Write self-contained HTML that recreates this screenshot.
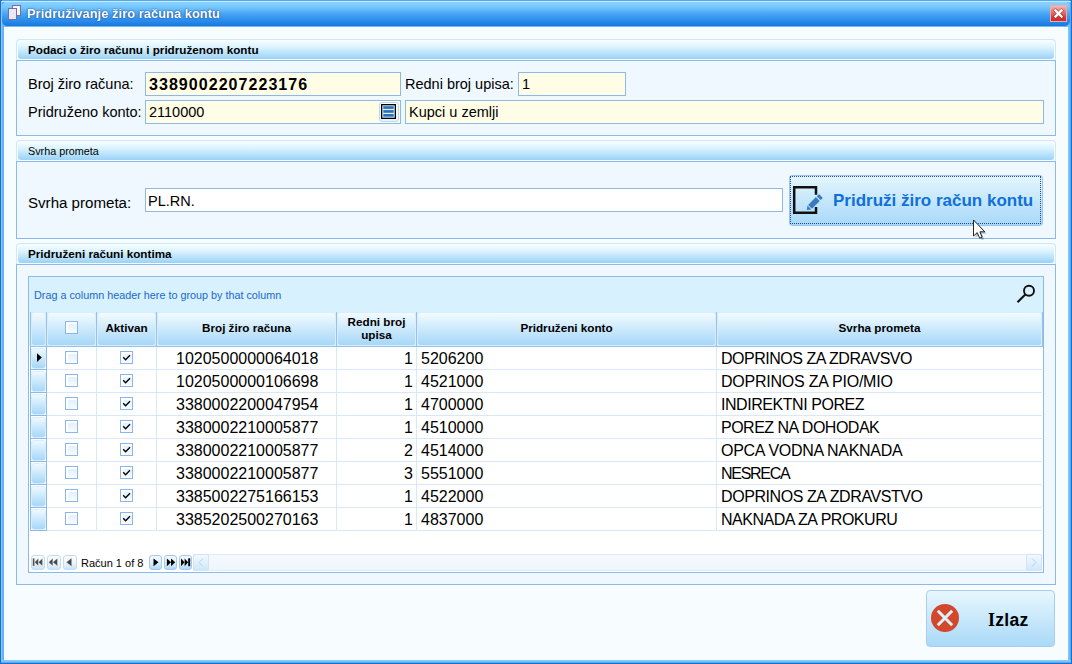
<!DOCTYPE html>
<html><head><meta charset="utf-8">
<style>
*{box-sizing:border-box;margin:0;padding:0}
html,body{width:1072px;height:664px;overflow:hidden;background:#f7fcff;font-family:"Liberation Sans",sans-serif;color:#000}
.a{position:absolute}
.nw{white-space:nowrap}
#win{position:absolute;left:0;top:0;width:1072px;height:664px;background:#1a6ed0}
#frame{position:absolute;left:1px;top:1px;width:1070px;height:662px;background:#6cbcf8}
#fl{position:absolute;left:1px;top:1px;width:3px;height:662px;background:linear-gradient(90deg,#92d0fa,#68b8f6 50%,#58aef4)}
#fr{position:absolute;left:1068px;top:1px;width:3px;height:662px;background:linear-gradient(90deg,#80c8fa,#70c0f8 50%,#4a9ee8)}
#fb{position:absolute;left:1px;top:660px;width:1070px;height:3px;background:linear-gradient(#88ccfa,#78c4f8 50%,#4a9ee8)}
#ft{position:absolute;left:1px;top:1px;width:1070px;height:1px;background:#c4eaff}
#ft0{position:absolute;left:2px;top:0;width:1068px;height:1px;background:#52a8ec}
#title{position:absolute;left:2px;top:2px;width:1068px;height:24px;background:linear-gradient(#8ad2fe 0%,#78c8fc 20%,#46a4f2 50%,#2a8cea 78%,#1878e0 100%);border-radius:5px}
#client{position:absolute;left:4px;top:27px;width:1064px;height:633px;background:#f7fcff;border-left:1px solid #fff;border-top:1px solid #fff}
.ttl{position:absolute;left:25px;top:4px;letter-spacing:0.1px;font-weight:bold;font-size:12.75px;color:#fff;text-shadow:0 0 2px #1b4f9a,0 0 1px #1b4f9a;white-space:nowrap}
.grp{position:absolute;left:16px;width:1040px;border:1px solid #8db8ea;background:#eff8ff}
.grp{border-top:none}
.gh{position:absolute;left:-1px;top:0;right:-1px;height:22px;background:#f7fcff;border-bottom:1px solid #8db8ea}
.gho{position:absolute;left:0;top:0;right:0;height:21px;border:1px solid #cfe8f9;border-bottom:none;border-radius:4px 4px 0 0;background:#f6fcff}
.ghi{position:absolute;left:1px;top:1px;right:1px;bottom:1px;border-radius:3px;background:linear-gradient(#f4fdff,#daf3fe 35%,#9ad2f6)}
.ght{position:absolute;left:12px;top:4px;font-size:11.7px;white-space:nowrap}
.lbl{position:absolute;font-size:14.5px;white-space:nowrap}
.inp{position:absolute;border:1px solid #8db8ea;background:#fffde6;height:24px}
.it{position:absolute;left:3px;top:3px;font-size:14.5px;white-space:nowrap}
.hc{position:absolute;top:312px;height:34px;border-radius:3px;background:linear-gradient(#f2fbff,#a6d7f8);border:1px solid #d8eefc}
.ht{position:absolute;font-weight:bold;font-size:11.7px;white-space:nowrap;text-align:center;line-height:13px}
.vl{position:absolute;width:1px}
.hl{position:absolute;height:1px}
.rt{position:absolute;font-size:16px;white-space:nowrap}
.cb{position:absolute;width:13px;height:13px;border:1px solid #8ab6ec;background:#fff}
.cbi{position:absolute;left:2px;top:2px;width:9px;height:9px;border-radius:2px;background:linear-gradient(#e2f0fc,#f8fcff)}
.ic{position:absolute;left:31px;width:15px;height:21px;border-radius:3px;background:linear-gradient(#eef9ff,#a6d7f8);border:1px solid #d8eefc}
.nb{position:absolute;top:555px;width:14px;height:15px;border:1px solid #c2dcf4;border-radius:3px;background:linear-gradient(#fbfdff,#eef7fe 50%,#c8e6fa)}
</style></head><body>
<div id="win"></div><div id="frame"></div><div id="fl"></div><div id="fr"></div><div id="fb"></div><div id="ft"></div><div id="ft0"></div>
<div id="title">
  <svg class="a" style="left:6px;top:3px" width="14" height="16" viewBox="0 0 14 16">
    <rect x="4.5" y="0.5" width="8" height="10" fill="#f4f6fb" stroke="#7a6f9a"/>
    <rect x="0.5" y="3.5" width="8" height="11" fill="#e6eaf6" stroke="#7a6f9a"/>
  </svg>
  <div class="ttl">Pridruživanje žiro računa kontu</div>
  <div class="a" style="left:1048px;top:3px;width:17px;height:17px;background:linear-gradient(#f4b8b8,#e26a6a 45%,#d63a3a 75%,#cc2a2a);border:1px solid #f0aaaa"></div>
  <svg class="a" style="left:1048px;top:3px" width="17" height="17" viewBox="0 0 17 17"><path d="M5.5 5.5L11.5 11.5M11.5 5.5L5.5 11.5" stroke="#9a1a1a" stroke-opacity="0.4" stroke-width="4" stroke-linecap="square"/><path d="M5.5 5.5L11.5 11.5M11.5 5.5L5.5 11.5" stroke="#fff" stroke-width="2.3" stroke-linecap="square"/></svg>
</div>
<div id="client"></div>
<div class="grp" style="top:39px;height:97px"><div class="gh"><div class="gho"><div class="ghi"></div></div><div class="ght" style="font-weight:bold">Podaci o žiro računu i pridruženom kontu</div></div></div>
<div class="lbl" style="left:28px;top:76px">Broj žiro računa:</div>
<div class="inp" style="left:145px;top:72px;width:256px"><div class="it" style="font-weight:bold;font-size:16px;letter-spacing:1.05px;top:3px">3389002207223176</div></div>
<div class="lbl" style="left:405px;top:76px">Redni broj upisa:</div>
<div class="inp" style="left:518px;top:72px;width:108px"><div class="it">1</div></div>
<div class="lbl" style="left:28px;top:104px">Pridruženo konto:</div>
<div class="inp" style="left:145px;top:100px;width:256px"><div class="it">2110000</div>
  <div class="a" style="left:233px;top:1px;width:20px;height:20px;border:1px solid #b9d9f4;border-radius:3px;background:linear-gradient(#fdfeff,#e4f3fc)"></div>
  <svg class="a" style="left:235px;top:3px" width="15" height="15" viewBox="0 0 15 15"><rect x="0.65" y="0.65" width="13.7" height="13.7" fill="#d6f2fc" stroke="#000" stroke-width="1.3"/><rect x="2.3" y="2.2" width="10.4" height="2.7" fill="#2f6fb8"/><rect x="2.3" y="6.1" width="10.4" height="2.7" fill="#2f6fb8"/><rect x="2.3" y="10" width="10.4" height="2.7" fill="#2f6fb8"/></svg>
</div>
<div class="inp" style="left:405px;top:100px;width:639px"><div class="it">Kupci u zemlji</div></div>
<div class="grp" style="top:140px;height:99px"><div class="gh"><div class="gho"><div class="ghi"></div></div><div class="ght" style="font-size:10.8px;top:5px">Svrha prometa</div></div></div>
<div class="lbl" style="left:28px;top:194px;font-size:15.1px">Svrha prometa:</div>
<div class="inp" style="left:145px;top:188px;width:638px;background:#fff"><div class="it" style="left:2px;top:4px">PL.RN.</div></div>
<div class="a" style="left:789px;top:175px;width:254px;height:51px;border:1px solid #9cc4ee;border-radius:3px;background:linear-gradient(#e4f6fe,#a8d8f8)"></div>
<div class="a" style="left:790px;top:176px;width:251px;height:48px;border:1px dotted #1e4c8c"></div>
<svg class="a" style="left:790px;top:183px" width="36" height="32" viewBox="0 0 36 32">
  <path d="M26 11.8V4.2H4.2V29.8H26V23.9" fill="none" stroke="#111" stroke-width="2.5"/>
  <g transform="translate(20.05,23.8) rotate(-45)" fill="#3a7ac0"><rect x="0" y="-2.7" width="11" height="5.4"/><rect x="12.2" y="-2.7" width="3.2" height="5.4" rx="0.6"/><path d="M-1 -2.7V2.7L-4.6 0Z"/></g>
</svg>
<div class="a nw" style="left:833px;top:191px;font-weight:bold;font-size:17px;color:#0e70dc">Pridruži žiro račun kontu</div>
<div class="grp" style="top:243px;height:342px"><div class="gh"><div class="gho"><div class="ghi"></div></div><div class="ght" style="font-weight:bold">Pridruženi računi kontima</div></div></div>
<div class="a" style="left:28px;top:276px;width:1016px;height:297px;border:1px solid #8db8ea;background:#fff"></div>
<div class="a" style="left:29px;top:277px;width:1014px;height:35px;background:#d7f1fe"></div>
<div class="a nw" style="left:34px;top:289px;font-size:10.8px;color:#2168cc">Drag a column header here to group by that column</div>
<svg class="a" style="left:1014px;top:282px" width="24" height="24" viewBox="0 0 24 24"><circle cx="15" cy="8.8" r="5" fill="none" stroke="#111" stroke-width="1.9"/><path d="M11.3 12.5L3.5 20.3" stroke="#111" stroke-width="2.1"/></svg>
<div class="a" style="left:29px;top:312px;width:1014px;height:34px;background:#d7f1fe"></div>

<div class="hc" style="left:31px;width:15px"></div>
<div class="hc" style="left:47px;width:49px"></div>
<div class="hc" style="left:97px;width:59px"></div>
<div class="hc" style="left:157px;width:179px"></div>
<div class="hc" style="left:337px;width:79px"></div>
<div class="hc" style="left:417px;width:299px"></div>
<div class="hc" style="left:717px;width:325px"></div>
<div class="vl" style="left:30px;top:312px;height:35px;background:#98c0ec"></div>
<div class="vl" style="left:46px;top:312px;height:35px;background:#98c0ec"></div>
<div class="vl" style="left:96px;top:312px;height:35px;background:#98c0ec"></div>
<div class="vl" style="left:156px;top:312px;height:35px;background:#98c0ec"></div>
<div class="vl" style="left:336px;top:312px;height:35px;background:#98c0ec"></div>
<div class="vl" style="left:416px;top:312px;height:35px;background:#98c0ec"></div>
<div class="vl" style="left:716px;top:312px;height:35px;background:#98c0ec"></div>
<div class="vl" style="left:1042px;top:312px;height:35px;background:#98c0ec"></div>
<div class="hl" style="left:30px;top:346px;width:1013px;background:#98c0ec"></div>
<div class="cb" style="left:65px;top:321px"><div class="cbi"></div></div>
<div class="ht" style="left:97px;width:59px;top:321px">Aktivan</div>
<div class="ht" style="left:157px;width:179px;top:321px">Broj žiro računa</div>
<div class="ht" style="left:337px;width:79px;top:315px">Redni broj<br>upisa</div>
<div class="ht" style="left:417px;width:299px;top:321px">Pridruženi konto</div>
<div class="ht" style="left:717px;width:325px;top:321px">Svrha prometa</div>
<div class="ic" style="top:348px"></div>
<div class="hl" style="left:30px;top:369px;width:17px;background:#8cb8ec"></div>
<div class="hl" style="left:47px;top:369px;width:995px;background:#d8e8f8"></div>
<div class="cb" style="left:65px;top:351px"><div class="cbi"></div></div>
<div class="cb" style="left:120px;top:351px"><div class="cbi"></div></div>
<svg class="a" style="left:120px;top:351px" width="13" height="13" viewBox="0 0 13 13"><path d="M3.2 6.3L5.6 8.8L10 4.2" fill="none" stroke="#000" stroke-width="1.35"/></svg>
<div class="rt" style="left:176px;top:350px">1020500000064018</div>
<div class="rt" style="left:337px;width:76px;text-align:right;top:350px">1</div>
<div class="rt" style="left:421px;top:350px">5206200</div>
<div class="rt" style="left:721px;top:350px;letter-spacing:-0.48px">DOPRINOS ZA ZDRAVSVO</div>
<div class="ic" style="top:371px"></div>
<div class="hl" style="left:30px;top:392px;width:17px;background:#8cb8ec"></div>
<div class="hl" style="left:47px;top:392px;width:995px;background:#d8e8f8"></div>
<div class="cb" style="left:65px;top:374px"><div class="cbi"></div></div>
<div class="cb" style="left:120px;top:374px"><div class="cbi"></div></div>
<svg class="a" style="left:120px;top:374px" width="13" height="13" viewBox="0 0 13 13"><path d="M3.2 6.3L5.6 8.8L10 4.2" fill="none" stroke="#000" stroke-width="1.35"/></svg>
<div class="rt" style="left:176px;top:373px">1020500000106698</div>
<div class="rt" style="left:337px;width:76px;text-align:right;top:373px">1</div>
<div class="rt" style="left:421px;top:373px">4521000</div>
<div class="rt" style="left:721px;top:373px;letter-spacing:-0.23px">DOPRINOS ZA PIO/MIO</div>
<div class="ic" style="top:394px"></div>
<div class="hl" style="left:30px;top:415px;width:17px;background:#8cb8ec"></div>
<div class="hl" style="left:47px;top:415px;width:995px;background:#d8e8f8"></div>
<div class="cb" style="left:65px;top:397px"><div class="cbi"></div></div>
<div class="cb" style="left:120px;top:397px"><div class="cbi"></div></div>
<svg class="a" style="left:120px;top:397px" width="13" height="13" viewBox="0 0 13 13"><path d="M3.2 6.3L5.6 8.8L10 4.2" fill="none" stroke="#000" stroke-width="1.35"/></svg>
<div class="rt" style="left:176px;top:396px">3380002200047954</div>
<div class="rt" style="left:337px;width:76px;text-align:right;top:396px">1</div>
<div class="rt" style="left:421px;top:396px">4700000</div>
<div class="rt" style="left:721px;top:396px;letter-spacing:-0.45px">INDIREKTNI POREZ</div>
<div class="ic" style="top:417px"></div>
<div class="hl" style="left:30px;top:438px;width:17px;background:#8cb8ec"></div>
<div class="hl" style="left:47px;top:438px;width:995px;background:#d8e8f8"></div>
<div class="cb" style="left:65px;top:420px"><div class="cbi"></div></div>
<div class="cb" style="left:120px;top:420px"><div class="cbi"></div></div>
<svg class="a" style="left:120px;top:420px" width="13" height="13" viewBox="0 0 13 13"><path d="M3.2 6.3L5.6 8.8L10 4.2" fill="none" stroke="#000" stroke-width="1.35"/></svg>
<div class="rt" style="left:176px;top:419px">3380002210005877</div>
<div class="rt" style="left:337px;width:76px;text-align:right;top:419px">1</div>
<div class="rt" style="left:421px;top:419px">4510000</div>
<div class="rt" style="left:721px;top:419px;letter-spacing:-0.5px">POREZ NA DOHODAK</div>
<div class="ic" style="top:440px"></div>
<div class="hl" style="left:30px;top:461px;width:17px;background:#8cb8ec"></div>
<div class="hl" style="left:47px;top:461px;width:995px;background:#d8e8f8"></div>
<div class="cb" style="left:65px;top:443px"><div class="cbi"></div></div>
<div class="cb" style="left:120px;top:443px"><div class="cbi"></div></div>
<svg class="a" style="left:120px;top:443px" width="13" height="13" viewBox="0 0 13 13"><path d="M3.2 6.3L5.6 8.8L10 4.2" fill="none" stroke="#000" stroke-width="1.35"/></svg>
<div class="rt" style="left:176px;top:442px">3380002210005877</div>
<div class="rt" style="left:337px;width:76px;text-align:right;top:442px">2</div>
<div class="rt" style="left:421px;top:442px">4514000</div>
<div class="rt" style="left:721px;top:442px;letter-spacing:-0.3px">OPCA VODNA NAKNADA</div>
<div class="ic" style="top:463px"></div>
<div class="hl" style="left:30px;top:484px;width:17px;background:#8cb8ec"></div>
<div class="hl" style="left:47px;top:484px;width:995px;background:#d8e8f8"></div>
<div class="cb" style="left:65px;top:466px"><div class="cbi"></div></div>
<div class="cb" style="left:120px;top:466px"><div class="cbi"></div></div>
<svg class="a" style="left:120px;top:466px" width="13" height="13" viewBox="0 0 13 13"><path d="M3.2 6.3L5.6 8.8L10 4.2" fill="none" stroke="#000" stroke-width="1.35"/></svg>
<div class="rt" style="left:176px;top:465px">3380002210005877</div>
<div class="rt" style="left:337px;width:76px;text-align:right;top:465px">3</div>
<div class="rt" style="left:421px;top:465px">5551000</div>
<div class="rt" style="left:721px;top:465px;letter-spacing:-1.27px">NESRECA</div>
<div class="ic" style="top:486px"></div>
<div class="hl" style="left:30px;top:507px;width:17px;background:#8cb8ec"></div>
<div class="hl" style="left:47px;top:507px;width:995px;background:#d8e8f8"></div>
<div class="cb" style="left:65px;top:489px"><div class="cbi"></div></div>
<div class="cb" style="left:120px;top:489px"><div class="cbi"></div></div>
<svg class="a" style="left:120px;top:489px" width="13" height="13" viewBox="0 0 13 13"><path d="M3.2 6.3L5.6 8.8L10 4.2" fill="none" stroke="#000" stroke-width="1.35"/></svg>
<div class="rt" style="left:176px;top:488px">3385002275166153</div>
<div class="rt" style="left:337px;width:76px;text-align:right;top:488px">1</div>
<div class="rt" style="left:421px;top:488px">4522000</div>
<div class="rt" style="left:721px;top:488px;letter-spacing:-0.42px">DOPRINOS ZA ZDRAVSTVO</div>
<div class="ic" style="top:509px"></div>
<div class="hl" style="left:30px;top:530px;width:17px;background:#8cb8ec"></div>
<div class="hl" style="left:47px;top:530px;width:995px;background:#d8e8f8"></div>
<div class="cb" style="left:65px;top:512px"><div class="cbi"></div></div>
<div class="cb" style="left:120px;top:512px"><div class="cbi"></div></div>
<svg class="a" style="left:120px;top:512px" width="13" height="13" viewBox="0 0 13 13"><path d="M3.2 6.3L5.6 8.8L10 4.2" fill="none" stroke="#000" stroke-width="1.35"/></svg>
<div class="rt" style="left:176px;top:511px">3385202500270163</div>
<div class="rt" style="left:337px;width:76px;text-align:right;top:511px">1</div>
<div class="rt" style="left:421px;top:511px">4837000</div>
<div class="rt" style="left:721px;top:511px;letter-spacing:-0.48px">NAKNADA ZA PROKURU</div>
<div class="vl" style="left:30px;top:347px;height:183px;background:#8cb8ec"></div>
<div class="vl" style="left:46px;top:347px;height:183px;background:#8cb8ec"></div>
<div class="vl" style="left:96px;top:347px;height:183px;background:#d8e8f8"></div>
<div class="vl" style="left:156px;top:347px;height:183px;background:#d8e8f8"></div>
<div class="vl" style="left:336px;top:347px;height:183px;background:#d8e8f8"></div>
<div class="vl" style="left:416px;top:347px;height:183px;background:#d8e8f8"></div>
<div class="vl" style="left:716px;top:347px;height:183px;background:#d8e8f8"></div>
<svg class="a" style="left:36px;top:352px" width="8" height="11" viewBox="0 0 8 11"><path d="M1 1.2L5.8 5.6L1 10Z" fill="#000"/></svg>
<div class="nb" style="left:31px"></div>
<div class="nb" style="left:47px"></div>
<div class="nb" style="left:63px"></div>
<svg class="a" style="left:29px;top:552px" width="50" height="20" viewBox="0 0 50 20"><g fill="#4a4a4a" stroke="#fff" stroke-opacity="0.6" stroke-width="0.5"><path d="M3.7 6.3H5.6V14H3.7Z"/><path d="M5.6 10.2L9.4 6.3V14Z"/><path d="M9.4 10.2L13.5 6.3V14Z"/><path d="M19.6 10.2L23.8 6.3V14Z"/><path d="M23.8 10.2L28.5 6.3V14Z"/><path d="M37.3 10.2L42.7 6V14.4Z"/></g></svg>
<div class="a nw" style="left:81px;top:557px;font-size:11px">Račun 1 of 8</div>
<div class="nb" style="left:149px;width:13px;border-color:#a4c8f0;background:linear-gradient(#f4faff,#dff1fd 50%,#b0dbf8)"></div>
<div class="nb" style="left:164px;width:13px;border-color:#a4c8f0;background:linear-gradient(#f4faff,#dff1fd 50%,#b0dbf8)"></div>
<div class="nb" style="left:179px;width:13px;border-color:#a4c8f0;background:linear-gradient(#f4faff,#dff1fd 50%,#b0dbf8)"></div>
<svg class="a" style="left:145px;top:552px" width="50" height="20" viewBox="0 0 50 20"><g fill="#000"><path d="M8.5 6.5L13.5 10.3L8.5 14.2Z"/><path d="M21.9 6.5L26 10.3L21.9 14.2Z"/><path d="M26 6.5L30.2 10.3L26 14.2Z"/><path d="M36 6.5L39.6 10.3L36 14.2Z"/><path d="M39.6 6.5L43.2 10.3L39.6 14.2Z"/><path d="M43.2 6.3H45.2V14.2H43.2Z"/></g></svg>
<div class="a" style="left:193px;top:554px;width:849px;height:17px;border:1px solid #dcecfa;background:linear-gradient(#f6faff,#eef5fc)"></div>
<div class="a" style="left:193px;top:554px;width:16px;height:17px;border:1px solid #cfe4f8;border-radius:2px;background:linear-gradient(#f2f9ff,#cfe8fb)"></div>
<div class="a" style="left:1026px;top:554px;width:16px;height:17px;border:1px solid #cfe4f8;border-radius:2px;background:linear-gradient(#f2f9ff,#cfe8fb)"></div>
<svg class="a" style="left:193px;top:554px" width="16" height="17" viewBox="0 0 16 17"><path d="M10 4.5L6 8.5L10 12.5" fill="none" stroke="#b8d0ec" stroke-width="1"/></svg>
<svg class="a" style="left:1026px;top:554px" width="16" height="17" viewBox="0 0 16 17"><path d="M6 4.5L10 8.5L6 12.5" fill="none" stroke="#b8d0ec" stroke-width="1"/></svg>
<div class="a" style="left:926px;top:590px;width:129px;height:57px;border:1px solid #a9cdf2;border-radius:4px;background:linear-gradient(#e8f7fe,#a9d9f8)"></div>
<svg class="a" style="left:930px;top:603px" width="30" height="30" viewBox="0 0 30 30"><circle cx="15" cy="15" r="14" fill="#d3482c"/><path d="M7.8 7.8L22.2 22.2M22.2 7.8L7.8 22.2" stroke="#dff0fa" stroke-width="3"/></svg>
<div class="a nw" style="left:988px;top:610px;font-weight:bold;font-size:17.5px;letter-spacing:0.3px"><span style="font-family:'Liberation Serif',serif;font-size:18px">I</span>zlaz</div>
<svg class="a" style="left:972px;top:219px" width="18" height="24" viewBox="0 0 18 24"><path d="M3.5 3V19L7.2 15.6L9.7 21.2L12.1 20.2L9.9 14.8H14.8Z" fill="#000" fill-opacity="0.22"/><path d="M1.5 1V17L5.2 13.6L7.7 19.2L10.1 18.2L7.9 12.8H12.8Z" fill="#fff" stroke="#000" stroke-width="0.85" stroke-linejoin="round"/></svg>
</body></html>
